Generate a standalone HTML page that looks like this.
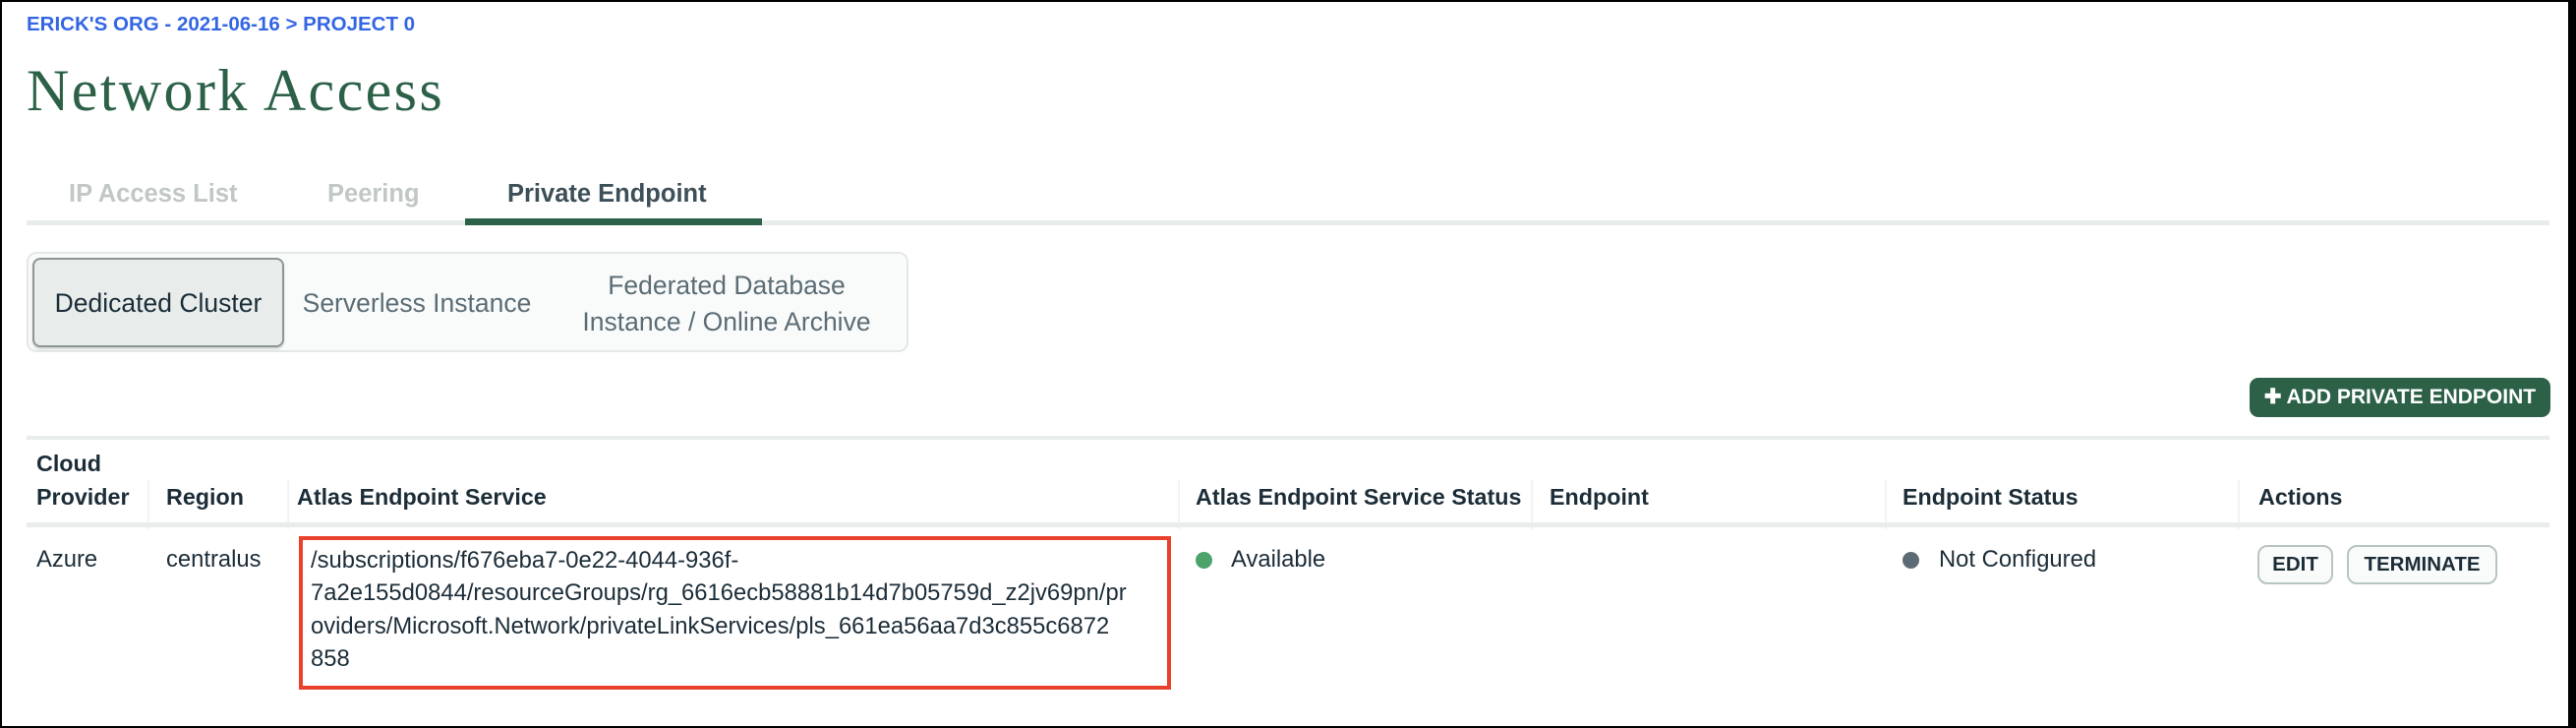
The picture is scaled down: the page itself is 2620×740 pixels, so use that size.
<!DOCTYPE html>
<html><head><meta charset="utf-8"><style>
*{margin:0;padding:0;box-sizing:border-box}
html,body{width:2620px;height:740px;overflow:hidden;background:#000}
#pg{position:absolute;left:2px;top:2px;width:2610px;height:736px;background:#fff;font-family:"Liberation Sans",sans-serif;color:#1c2d38}
.a{position:absolute;white-space:nowrap}
.bc{left:25px;top:11px;font-size:20.5px;font-weight:bold;color:#3466e4}
.tt{left:25px;top:56px;font-family:"Liberation Serif",serif;font-size:60px;color:#2c6148;letter-spacing:2.4px}
.tab{top:181px;font-size:25.5px;font-weight:bold;color:#c1c7c6}
.hl{left:25px;width:2566px;height:4px;background:#e8edeb}
.seg{left:25px;top:254px;width:897px;height:102px;border:2px solid #e3e8e6;border-radius:10px;background:#f9fbfa}
.sel{left:31px;top:260px;width:256px;height:91px;border:2px solid #8c9795;border-radius:8px;background:#e8edeb;box-shadow:0 2px 2px rgba(0,0,0,.15)}
.st{font-size:26.5px;color:#5c6c75;text-align:center}
.th{font-size:23.3px;font-weight:bold;color:#1c2d38}
.vs{width:2px;height:50px;top:486px;background:#f1f4f3}
.td{font-size:23.8px;color:#1c2d38}
.dot{width:17px;height:17px;border-radius:50%;top:559px}
.btn{top:552px;height:40px;border:2px solid #b8c4c2;border-radius:10px;background:#f9fbfa;font-size:20.5px;font-weight:bold;text-align:center;line-height:36px;color:#1c2d38}
</style></head><body><div id="pg">
<div class="a bc">ERICK'S ORG - 2021-06-16 &gt; PROJECT 0</div>
<div class="a tt">Network Access</div>
<div class="a tab" style="left:68px">IP Access List</div>
<div class="a tab" style="left:331px">Peering</div>
<div class="a tab" style="left:514px;color:#3d4f58">Private Endpoint</div>
<div class="a hl" style="top:222px;height:5px"></div>
<div class="a" style="left:471px;top:220px;width:302px;height:7px;background:#2c6148"></div>
<div class="a seg"></div>
<div class="a sel"></div>
<div class="a st" style="left:31px;top:291px;width:256px;color:#1c2d38">Dedicated Cluster</div>
<div class="a st" style="left:290px;top:291px;width:264px">Serverless Instance</div>
<div class="a st" style="left:560px;top:270px;width:354px;line-height:37px">Federated Database<br>Instance / Online Archive</div>
<div class="a" style="left:2286px;top:382px;width:306px;height:40px;background:#2c6148;border-radius:9px;color:#fff;font-size:21px;font-weight:bold;text-align:center;line-height:40px">✚ ADD PRIVATE ENDPOINT</div>
<div class="a hl" style="top:441px"></div>
<div class="a th" style="left:35px;top:456px">Cloud</div>
<div class="a th" style="left:35px;top:490px">Provider</div>
<div class="a th" style="left:167px;top:490px">Region</div>
<div class="a th" style="left:300px;top:490px">Atlas Endpoint Service</div>
<div class="a th" style="left:1214px;top:490px">Atlas Endpoint Service Status</div>
<div class="a th" style="left:1574px;top:490px">Endpoint</div>
<div class="a th" style="left:1933px;top:490px">Endpoint Status</div>
<div class="a th" style="left:2295px;top:490px">Actions</div>
<div class="a vs" style="left:148px"></div>
<div class="a vs" style="left:290px"></div>
<div class="a vs" style="left:1196px"></div>
<div class="a vs" style="left:1555px"></div>
<div class="a vs" style="left:1915px"></div>
<div class="a vs" style="left:2274px"></div>
<div class="a hl" style="top:529px;height:5px"></div>
<div class="a td" style="left:35px;top:553px">Azure</div>
<div class="a td" style="left:167px;top:553px">centralus</div>
<div class="a" style="left:302px;top:543px;width:887px;height:156px;border:4px solid #e8412c"></div>
<div class="a td" style="left:314px;top:551px;line-height:33.3px">/subscriptions/f676eba7-0e22-4044-936f-<br>7a2e155d0844/resourceGroups/rg_6616ecb58881b14d7b05759d_z2jv69pn/pr<br>oviders/Microsoft.Network/privateLinkServices/pls_661ea56aa7d3c855c6872<br>858</div>
<div class="a dot" style="left:1214px;background:#4ba36a"></div>
<div class="a td" style="left:1250px;top:553px">Available</div>
<div class="a dot" style="left:1933px;background:#5d6c74"></div>
<div class="a td" style="left:1970px;top:553px">Not Configured</div>
<div class="a btn" style="left:2294px;width:77px">EDIT</div>
<div class="a btn" style="left:2385px;width:153px">TERMINATE</div>
</div></body></html>
